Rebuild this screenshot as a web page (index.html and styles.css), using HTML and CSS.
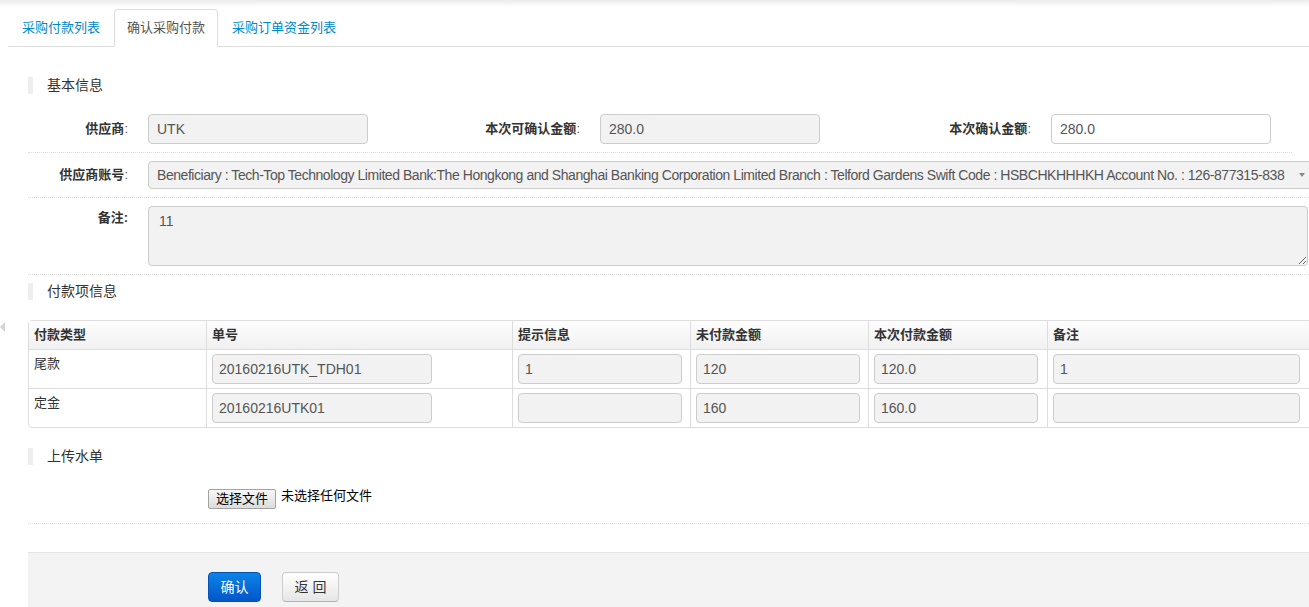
FILE: index.html
```html
<!DOCTYPE html>
<html lang="zh-CN">
<head>
<meta charset="utf-8">
<title>确认采购付款</title>
<link rel="stylesheet" href="styles.css">
</head>
<body>
<ul class="tabs">
  <li class="tab">采购付款列表</li>
  <li class="tab active">确认采购付款</li>
  <li class="tab">采购订单资金列表</li>
</ul>

<span class="side-toggle"></span>

<div class="content">
  <div class="sec-title sec-basic">基本信息</div>

  <div class="form-row row-3col">
    <div class="field">
      <label><b>供应商</b>:</label>
      <input class="input" type="text" value="UTK" readonly>
    </div>
    <div class="field">
      <label><b>本次可确认金额</b>:</label>
      <input class="input" type="text" value="280.0" readonly>
    </div>
    <div class="field">
      <label><b>本次确认金额</b>:</label>
      <input class="input editable" type="text" value="280.0">
    </div>
  </div>

  <div class="form-row">
    <div class="field">
      <label><b>供应商账号</b>:</label>
      <div class="select">
        <span class="select-text">Beneficiary : Tech-Top Technology Limited Bank:The Hongkong and Shanghai Banking Corporation Limited Branch : Telford Gardens Swift Code : HSBCHKHHHKH Account No. : 126-877315-838</span>
        <span class="select-arrow"></span>
      </div>
    </div>
  </div>

  <div class="form-row">
    <div class="field field-top">
      <label><b>备注:</b></label>
      <textarea class="textarea" readonly>11</textarea>
    </div>
  </div>

  <div class="sec-title sec-pay">付款项信息</div>

  <table class="grid">
    <thead>
      <tr>
        <th class="c1">付款类型</th>
        <th class="c2">单号</th>
        <th class="c3">提示信息</th>
        <th class="c4">未付款金额</th>
        <th class="c5">本次付款金额</th>
        <th>备注</th>
      </tr>
    </thead>
    <tbody>
      <tr>
        <td>尾款</td>
        <td><input class="tinput w220" type="text" value="20160216UTK_TDH01" readonly></td>
        <td><input class="tinput w164" type="text" value="1" readonly></td>
        <td><input class="tinput w164" type="text" value="120" readonly></td>
        <td><input class="tinput w164" type="text" value="120.0" readonly></td>
        <td><input class="tinput w247" type="text" value="1" readonly></td>
      </tr>
      <tr>
        <td>定金</td>
        <td><input class="tinput w220" type="text" value="20160216UTK01" readonly></td>
        <td><input class="tinput w164" type="text" value="" readonly></td>
        <td><input class="tinput w164" type="text" value="160" readonly></td>
        <td><input class="tinput w164" type="text" value="160.0" readonly></td>
        <td><input class="tinput w247" type="text" value="" readonly></td>
      </tr>
    </tbody>
  </table>

  <div class="sec-title sec-upload">上传水单</div>

  <div class="upload-row">
    <span class="filebtn">选择文件</span>
    <span class="filetext">未选择任何文件</span>
  </div>

  <div class="footer">
    <button class="btn btn-primary" type="button">确认</button>
    <button class="btn btn-default" type="button">返 回</button>
  </div>
</div>
</body>
</html>
```

FILE: styles.css
```css
html, body {
  margin: 0;
  padding: 0;
  overflow: hidden;
}

body {
  width: 1309px;
  min-height: 607px;
  font-family: "Liberation Sans", "Noto Sans CJK SC", sans-serif;
  font-size: 13px;
  color: #333;
  background: #fff linear-gradient(#ebebeb, #fff 7px) no-repeat;
  position: relative;
}

/* Tabs */
.tabs {
  display: flex;
  list-style: none;
  margin: 9px 0 0 8px;
  padding: 0 0 0 1px;
  border-bottom: 1px solid #ddd;
}

.tab {
  padding: 8px 12px;
  line-height: 20px;
  border: 1px solid transparent;
  border-radius: 4px 4px 0 0;
  margin-right: 1px;
  margin-bottom: -1px;
  color: #0088cc;
}

.tab.active {
  border-color: #ddd #ddd transparent;
  background: #fff;
  color: #555;
}

.side-toggle {
  position: absolute;
  left: 0;
  top: 322px;
  width: 0;
  height: 0;
  border-right: 5px solid #d4d4d4;
  border-top: 5px solid transparent;
  border-bottom: 5px solid transparent;
}

/* Content */
.content {
  padding-left: 28px;
}

.sec-title {
  border-left: 5px solid #eee;
  padding-left: 14px;
  height: 17px;
  line-height: 17px;
  font-size: 14px;
  color: #333;
}

.sec-basic {
  margin-top: 30px;
  margin-bottom: 12px;
}

.sec-pay {
  margin-top: 8px;
}

.sec-upload {
  margin-top: 20px;
}

/* Form rows */
.form-row {
  padding: 8px 0;
  border-bottom: 1px dotted #dcdcdc;
}

.row-3col {
  display: grid;
  grid-template-columns: 452px 451px 1fr;
  width: 1264px;
}

.field {
  display: flex;
  align-items: center;
}

.field-top {
  align-items: flex-start;
}

.field label {
  flex: none;
  width: 100px;
  margin-right: 20px;
  text-align: right;
  line-height: 20px;
  color: #555;
  white-space: nowrap;
}

.field label b {
  color: #333;
  font-weight: bold;
}

.field-top label {
  padding-top: 2px;
}

.input {
  box-sizing: border-box;
  width: 220px;
  height: 30px;
  padding: 0 8px;
  border: 1px solid #ccc;
  border-radius: 4px;
  background: #f2f2f2;
  color: #555;
  font: 14px "Liberation Sans", sans-serif;
  outline: none;
  margin: 0;
}

.input.editable {
  background: #fff;
}

.select {
  box-sizing: border-box;
  flex: none;
  width: 1170px;
  height: 28px;
  display: flex;
  align-items: center;
  padding: 0 12px 0 8px;
  border: 1px solid #ccc;
  border-radius: 4px;
  background: #f2f2f2;
  color: #555;
  font-size: 14px;
  white-space: nowrap;
  overflow: hidden;
}

.select-text {
  flex: 1;
  min-width: 0;
  overflow: hidden;
  letter-spacing: -0.45px;
}

.select-arrow {
  flex: none;
  width: 0;
  height: 0;
  margin-left: 10px;
  border-left: 3px solid transparent;
  border-right: 3px solid transparent;
  border-top: 4px solid #888;
}

.textarea {
  box-sizing: border-box;
  flex: none;
  width: 1160px;
  height: 60px;
  margin: 0;
  padding: 4px 10px;
  border: 1px solid #ccc;
  border-radius: 4px;
  background: #f2f2f2;
  color: #555;
  font: 14px/20px "Liberation Sans", sans-serif;
  outline: none;
}

/* Table */
.grid {
  width: 1290px;
  margin-top: 20px;
  border-collapse: separate;
  border-spacing: 0;
  border: 1px solid #ddd;
  border-radius: 4px;
  table-layout: fixed;
}

.grid th,
.grid td {
  box-sizing: border-box;
  padding: 4px 5px;
  line-height: 20px;
  text-align: left;
  vertical-align: top;
  border-left: 1px solid #ddd;
  border-top: 1px solid #ddd;
  white-space: nowrap;
}

.grid th:first-child,
.grid td:first-child {
  border-left: 0;
}

.grid thead th {
  border-top: 0;
  font-weight: bold;
  color: #333;
  background: linear-gradient(#fdfdfd, #f1f1f1);
}

.grid .c1 { width: 177px; }
.grid .c2 { width: 306px; }
.grid .c3 { width: 178px; }
.grid .c4 { width: 178px; }
.grid .c5 { width: 179px; }

.tinput {
  box-sizing: border-box;
  display: block;
  height: 30px;
  margin: 0;
  padding: 0 6px;
  border: 1px solid #ccc;
  border-radius: 4px;
  background: #f2f2f2;
  color: #555;
  font: 14px "Liberation Sans", sans-serif;
  outline: none;
}

.w220 { width: 220px; }
.w164 { width: 164px; }
.w247 { width: 247px; }

/* Upload */
.upload-row {
  display: flex;
  align-items: flex-start;
  padding: 24px 0 14px 180px;
  border-bottom: 1px dotted #dcdcdc;
}

.filebtn {
  box-sizing: border-box;
  width: 68px;
  height: 20px;
  border: 1px solid #a3a3a3;
  border-radius: 2px;
  background: linear-gradient(#f7f7f7, #dcdcdc);
  color: #000;
  font-size: 13px;
  line-height: 18px;
  text-align: center;
}

.filetext {
  margin-left: 5px;
  line-height: 14px;
  color: #000;
}

/* Footer */
.footer {
  display: flex;
  gap: 21px;
  margin-top: 28px;
  padding: 19px 0 20px 180px;
  border-top: 1px solid #e5e5e5;
  background: #f3f3f3;
}

.btn {
  box-sizing: border-box;
  height: 30px;
  margin: 0;
  padding: 0;
  border-radius: 4px;
  font: 14px/28px "Liberation Sans", "Noto Sans CJK SC", sans-serif;
  text-align: center;
  cursor: pointer;
}

.btn-primary {
  width: 53px;
  color: #fff;
  border: 1px solid #0552b5;
  background: linear-gradient(#0a84e6, #0455c9);
}

.btn-default {
  width: 57px;
  color: #333;
  border: 1px solid #ccc;
  border-bottom-color: #b3b3b3;
  background: linear-gradient(#fff, #e6e6e6);
}
```
